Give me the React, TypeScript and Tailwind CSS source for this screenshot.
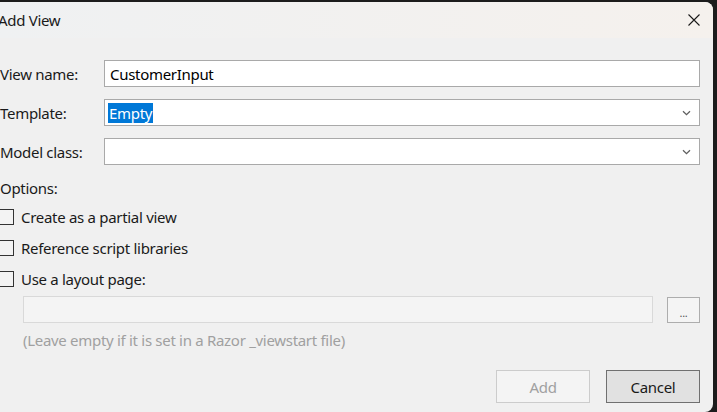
import React from 'react';

const font = { fontFamily: '"Segoe UI", "Noto Sans", sans-serif' };

const Chevron = () => (
  <svg width="9" height="6" viewBox="0 0 9 6" className="text-[#5f5f5f]">
    <path d="M1 1.2 L4.5 4.6 L8 1.2" fill="none" stroke="currentColor" strokeWidth="1.3" />
  </svg>
);

const Checkbox: React.FC<{ label: string }> = ({ label }) => (
  <div className="h-[31px] flex items-center">
    <div className="-ml-[2px] w-[16px] h-[16px] border border-[#333333] bg-[#f3f3f3]" />
    <span className="ml-[7px] text-[#1a1a1a]">{label}</span>
  </div>
);

export default function App() {
  return (
    <div className="w-[717px] h-[412px] bg-[#1c1c1c] overflow-hidden pt-[2px] pr-[4px] text-[15px] leading-[20px] tracking-[-0.3px]" style={font}>
      <div className="w-[713px] h-[410px] bg-[#f0f0f0] rounded-tr-[8px] rounded-br-[8px] overflow-hidden flex flex-col">
        {/* title bar */}
        <div className="h-[36px] flex items-center justify-between bg-gradient-to-r from-[#eff1f2] to-[#f5f1ed] pr-[13px]">
          <span className="-ml-[2px] text-[#1a1a1a]">Add View</span>
          <svg width="12" height="12" viewBox="0 0 12 12" className="text-[#1a1a1a]">
            <path d="M0.5 0.5 L11.5 11.5 M11.5 0.5 L0.5 11.5" stroke="currentColor" strokeWidth="1.1" />
          </svg>
        </div>

        <div className="flex flex-col pt-[22px] pr-[13px]">
          <div className="flex items-center gap-[12px] flex-col">
            <div className="w-full flex items-center">
              <span className="w-[104px] text-[#1a1a1a]">View name:</span>
              <div className="flex-1 h-[27px] bg-white border border-[#a9a9a9] flex items-center px-[5px] text-[#000]">CustomerInput</div>
            </div>
            <div className="w-full flex items-center">
              <span className="w-[104px] text-[#1a1a1a]">Template:</span>
              <div className="flex-1 h-[27px] bg-white border border-[#a9a9a9] flex items-center pl-[3px] pr-[8px] justify-between">
                <span className="bg-[#0078d7] text-white px-[1px]">Empty</span>
                <Chevron />
              </div>
            </div>
            <div className="w-full flex items-center">
              <span className="w-[104px] text-[#1a1a1a]">Model class:</span>
              <div className="flex-1 h-[27px] bg-white border border-[#a9a9a9] flex items-center justify-end pr-[8px]">
                <Chevron />
              </div>
            </div>
          </div>

          <div className="mt-[13px] h-[20px] text-[#1a1a1a]">Options:</div>

          <div className="mt-[3px] flex flex-col">
            <Checkbox label="Create as a partial view" />
            <Checkbox label="Reference script libraries" />
            <Checkbox label="Use a layout page:" />
          </div>

          <div className="mt-[2px] pl-[23px] flex items-center gap-[14px]">
            <div className="flex-1 h-[27px] bg-[#f4f4f4] border border-[#d9d9d9]" />
            <div className="w-[33px] h-[26px] bg-[#f4f4f4] border border-[#adadad] flex items-end justify-center pb-[3px] text-[11px] leading-[12px] text-[#555]">...</div>
          </div>

          <div className="mt-[7px] pl-[23px] h-[20px] text-[#a0a0a0]">(Leave empty if it is set in a Razor _viewstart file)</div>

          <div className="mt-[20px] flex justify-end gap-[16px]">
            <div className="w-[94px] h-[33px] bg-[#f4f4f4] border border-[#cccccc] flex items-center justify-center text-[#a0a0a0]">Add</div>
            <div className="w-[94px] h-[33px] bg-[#e1e1e1] border border-[#707070] flex items-center justify-center text-[#1a1a1a]">Cancel</div>
          </div>
        </div>
      </div>
    </div>
  );
}
